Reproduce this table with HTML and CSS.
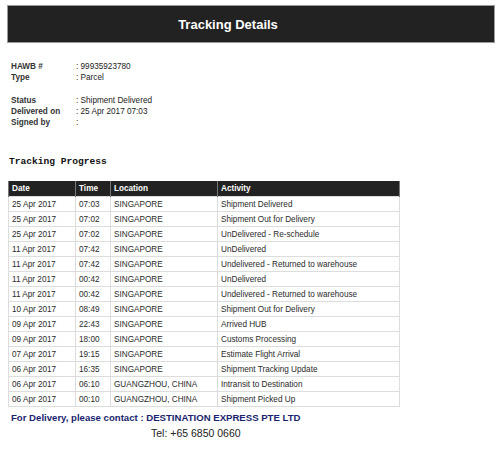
FILE: index.html
```html
<!DOCTYPE html>
<html>
<head>
<meta charset="utf-8">
<link rel="stylesheet" href="styles.css">
</head>
<body>
<div class="page">
  <div class="banner">Tracking Details</div>

  <div class="info">
    <div class="grp">
      <span class="lbl">HAWB #</span><span class="val">: 99935923780</span>
      <span class="lbl">Type</span><span class="val">: Parcel</span>
    </div>
    <div class="grp">
      <span class="lbl">Status</span><span class="val">: Shipment Delivered</span>
      <span class="lbl">Delivered on</span><span class="val">: 25 Apr 2017 07:03</span>
      <span class="lbl">Signed by</span><span class="val">:</span>
    </div>
  </div>

  <h2 class="progress">Tracking Progress</h2>

  <table class="track">
    <thead>
      <tr><th class="c-date">Date</th><th class="c-time">Time</th><th class="c-loc">Location</th><th class="c-act">Activity</th></tr>
    </thead>
    <tbody>
      <tr><td>25 Apr 2017</td><td>07:03</td><td>SINGAPORE</td><td>Shipment Delivered</td></tr>
      <tr><td>25 Apr 2017</td><td>07:02</td><td>SINGAPORE</td><td>Shipment Out for Delivery</td></tr>
      <tr><td>25 Apr 2017</td><td>07:02</td><td>SINGAPORE</td><td>UnDelivered - Re-schedule</td></tr>
      <tr><td>11 Apr 2017</td><td>07:42</td><td>SINGAPORE</td><td>UnDelivered</td></tr>
      <tr><td>11 Apr 2017</td><td>07:42</td><td>SINGAPORE</td><td>Undelivered - Returned to warehouse</td></tr>
      <tr><td>11 Apr 2017</td><td>00:42</td><td>SINGAPORE</td><td>UnDelivered</td></tr>
      <tr><td>11 Apr 2017</td><td>00:42</td><td>SINGAPORE</td><td>Undelivered - Returned to warehouse</td></tr>
      <tr><td>10 Apr 2017</td><td>08:49</td><td>SINGAPORE</td><td>Shipment Out for Delivery</td></tr>
      <tr><td>09 Apr 2017</td><td>22:43</td><td>SINGAPORE</td><td>Arrived HUB</td></tr>
      <tr><td>09 Apr 2017</td><td>18:00</td><td>SINGAPORE</td><td>Customs Processing</td></tr>
      <tr><td>07 Apr 2017</td><td>19:15</td><td>SINGAPORE</td><td>Estimate Flight Arrival</td></tr>
      <tr><td>06 Apr 2017</td><td>16:35</td><td>SINGAPORE</td><td>Shipment Tracking Update</td></tr>
      <tr><td>06 Apr 2017</td><td>06:10</td><td>GUANGZHOU, CHINA</td><td>Intransit to Destination</td></tr>
      <tr><td>06 Apr 2017</td><td>00:10</td><td>GUANGZHOU, CHINA</td><td>Shipment Picked Up</td></tr>
    </tbody>
  </table>

  <div class="contact">For Delivery, please contact : DESTINATION EXPRESS PTE LTD</div>
  <div class="tel">Tel: +65 6850 0660</div>
</div>
</body>
</html>
```

FILE: styles.css
```css
html, body {
  margin: 0;
  padding: 0;
  background: #ffffff;
}

.page {
  width: 500px;
  font-family: "Liberation Sans", Arial, sans-serif;
  color: #333333;
}

.banner {
  margin: 5px 5px 0 7px;
  height: 36px;
  padding-right: 46px;
  border: 1px solid #9a9a9a;
  background: #222222;
  color: #ffffff;
  font-weight: bold;
  font-size: 13px;
  display: flex;
  align-items: center;
  justify-content: center;
}

.info {
  padding: 18px 0 0 11px;
  font-size: 8.2px;
  line-height: 11px;
}

.grp {
  display: grid;
  grid-template-columns: 65px auto;
  margin-bottom: 12px;
}

.lbl {
  font-weight: bold;
  color: #333333;
}

.val {
  color: #222222;
}

.progress {
  margin: 28px 0 0 9px;
  font-family: "Liberation Mono", "Courier New", monospace;
  font-size: 9.6px;
  line-height: 12px;
  font-weight: bold;
  color: #111111;
}

.track {
  margin: 13px 0 0 8px;
  width: 392px;
  border-collapse: collapse;
  font-size: 8.2px;
  color: #2a2a2a;
}

.track th {
  background: #222222;
  color: #ffffff;
  font-weight: bold;
  text-align: left;
  height: 15px;
  padding: 0 0 0 3px;
  border-left: 1px solid #777777;
  border-right: 1px solid #777777;
}

.track td {
  height: 14px;
  padding: 0 0 0 3px;
  border: 1px solid #dddddd;
  white-space: nowrap;
}

.c-date { width: 63px; }
.c-time { width: 31px; }
.c-loc { width: 103px; }

.contact {
  margin: 5px 0 0 11px;
  font-size: 9.6px;
  font-weight: bold;
  color: #1a1f6e;
  line-height: 12px;
}

.tel {
  margin: 3px 0 0 151px;
  font-size: 10.5px;
  color: #222222;
  line-height: 13px;
}
```
